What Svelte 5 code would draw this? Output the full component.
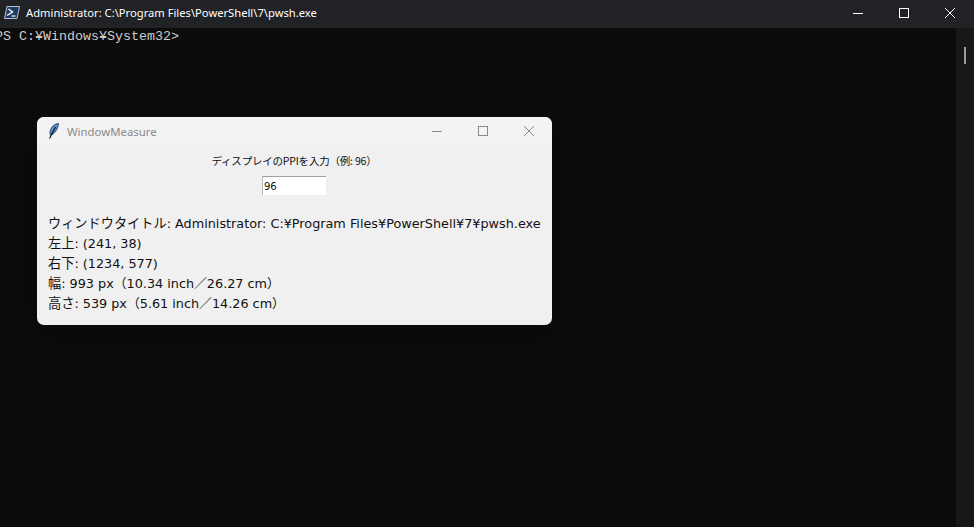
<script>
    const lines = [
        { label: 'ウィンドウタイトル', value: ': Administrator: C:¥Program Files¥PowerShell¥7¥pwsh.exe' },
        { label: '左上', value: ': (241, 38)' },
        { label: '右下', value: ': (1234, 577)' },
        { label: '幅', value: ': 993 px（10.34 inch／26.27 cm）' },
        { label: '高さ', value: ': 539 px（5.61 inch／14.26 cm）' },
    ];
</script>

<div class="terminal">
    <header class="term-bar">
        <svg class="ps-icon" width="16" height="13" viewBox="0 0 16 13">
            <path d="M3 .5h12.500L13 12.500H.5z" fill="#1e3a5f" stroke="#b9c6d6" />
            <path d="M4.500 3l4 3-5.500 3.500" fill="none" stroke="#fff" stroke-width="1.400" />
            <path d="M7.500 10h4" stroke="#fff" stroke-width="1.200" />
        </svg>
        <span class="term-title">Administrator: C:\Program Files\PowerShell\7\pwsh.exe</span>
        <div class="term-controls">
            <button aria-label="最小化"><svg width="12" height="12" viewBox="0 0 12 12"><path d="M1 6.500h10" stroke="#fff" /></svg></button>
            <button aria-label="最大化"><svg width="12" height="12" viewBox="0 0 12 12"><rect x="1.500" y="1.500" width="9" height="9" fill="none" stroke="#fff" /></svg></button>
            <button aria-label="閉じる"><svg width="12" height="12" viewBox="0 0 12 12"><path d="M1 1l10 10M11 1L1 11" stroke="#fff" /></svg></button>
        </div>
    </header>

    <div class="term-body">
        <pre class="prompt">PS C:¥Windows¥System32&gt;</pre>
        <div class="scrollbar"><div class="thumb"></div></div>
    </div>

    <section class="window">
        <header class="win-bar">
            <svg class="feather" width="11" height="16" viewBox="0 0 11 16">
                <path d="M10.500.5C6.500.8 2.800 4 2 9c-.2 1.500 0 2.500.5 3C6.500 11.500 10 6 10.500.5z" fill="#5b8fd0" stroke="#1b2f4d" stroke-width="0.8" />
                <path d="M7.500 4L1.500 15.500" stroke="#0a0a0a" stroke-width="1.100" fill="none" />
            </svg>
            <span class="win-title">WindowMeasure</span>
            <div class="win-controls">
                <button aria-label="最小化"><svg width="12" height="12" viewBox="0 0 12 12"><path d="M1 6.500h10" stroke="#8a8a8a" /></svg></button>
                <button aria-label="最大化"><svg width="12" height="12" viewBox="0 0 12 12"><rect x="1.500" y="1.500" width="9" height="9" fill="none" stroke="#8a8a8a" /></svg></button>
                <button aria-label="閉じる"><svg width="12" height="12" viewBox="0 0 12 12"><path d="M1 1l10 10M11 1L1 11" stroke="#8a8a8a" /></svg></button>
            </div>
        </header>
        <div class="win-body">
            <label class="ppi-label" for="ppi">ディスプレイのPPIを入力（例: 96）</label>
            <input id="ppi" class="ppi-input" value="96" />
            <div class="result">
                {#each lines as line}
                    <p><span class="key">{line.label}</span>{line.value}</p>
                {/each}
            </div>
        </div>
    </section>
</div>

<style>
    :global(body) {
        margin: 0;
        background: #0c0c0c;
    }

    .terminal {
        position: relative;
        width: 974px;
        height: 527px;
        overflow: hidden;
        display: flex;
        flex-direction: column;
        background: #0c0c0c;
    }

    .term-bar {
        height: 28px;
        flex: none;
        box-sizing: border-box;
        padding-bottom: 3px;
        display: flex;
        align-items: center;
        background: #202225;
        color: #fff;
    }

    .ps-icon {
        margin-left: 4px;
        flex: none;
    }

    .term-title {
        margin-left: 6px;
        font: 11.2px "Noto Sans", "Liberation Sans", sans-serif;
        white-space: nowrap;
    }

    .term-controls {
        margin-left: auto;
        padding-right: 1px;
        display: flex;
    }

    .term-controls button {
        width: 46px;
        height: 25px;
        padding: 0;
        border: 0;
        background: none;
        display: flex;
        align-items: center;
        justify-content: center;
    }

    .term-body {
        flex: 1;
        display: flex;
        justify-content: space-between;
    }

    .prompt {
        margin: 0 0 0 -5px;
        padding-top: 1px;
        font: 13.33px/16px "Liberation Mono", monospace;
        color: #cccccc;
    }

    .scrollbar {
        width: 18px;
        background: #171717;
        padding: 19px 0 0 8px;
        box-sizing: border-box;
    }

    .thumb {
        width: 2px;
        height: 17px;
        background: #9a9a9a;
    }

    .window {
        position: absolute;
        left: 37px;
        top: 117px;
        width: 515px;
        height: 208px;
        border-radius: 7px;
        overflow: hidden;
        background: #f0f0f0;
        box-shadow: 0 8px 40px rgba(0, 0, 0, 0.35);
    }

    .win-bar {
        height: 28px;
        display: flex;
        align-items: center;
        background: #f3f3f3;
    }

    .feather {
        margin-left: 11px;
        flex: none;
    }

    .win-title {
        margin-left: 8px;
        font: 11.4px "Noto Sans", "Liberation Sans", sans-serif;
        color: #8a8a8a;
    }

    .win-controls {
        margin-left: auto;
        display: flex;
    }

    .win-controls button {
        width: 46px;
        height: 28px;
        padding: 0;
        border: 0;
        background: none;
        display: flex;
        align-items: center;
        justify-content: center;
    }

    .win-body {
        display: flex;
        flex-direction: column;
        align-items: center;
        padding-top: 8px;
        color: #111;
    }

    .ppi-label {
        font: 10.5px/16px "Noto Sans CJK JP", sans-serif;
        letter-spacing: -0.2px;
        margin-right: 1px;
    }

    .ppi-input {
        width: 64px;
        height: 19px;
        margin: 7px 1px 0 0;
        padding: 0 1px;
        box-sizing: border-box;
        border: 0;
        border-top: 1px solid #a0a0a0;
        border-left: 1px solid #b8b8b8;
        background: #fff;
        font: 10px "DejaVu Sans", sans-serif;
        color: #111;
    }

    .result {
        align-self: stretch;
        margin-top: 19px;
        padding-left: 11px;
    }

    .result p {
        margin: 0;
        font: 12.8px/20px "DejaVu Sans", "Noto Sans CJK JP", sans-serif;
        white-space: nowrap;
    }

    .key {
        font-size: 13.2px;
    }
</style>
